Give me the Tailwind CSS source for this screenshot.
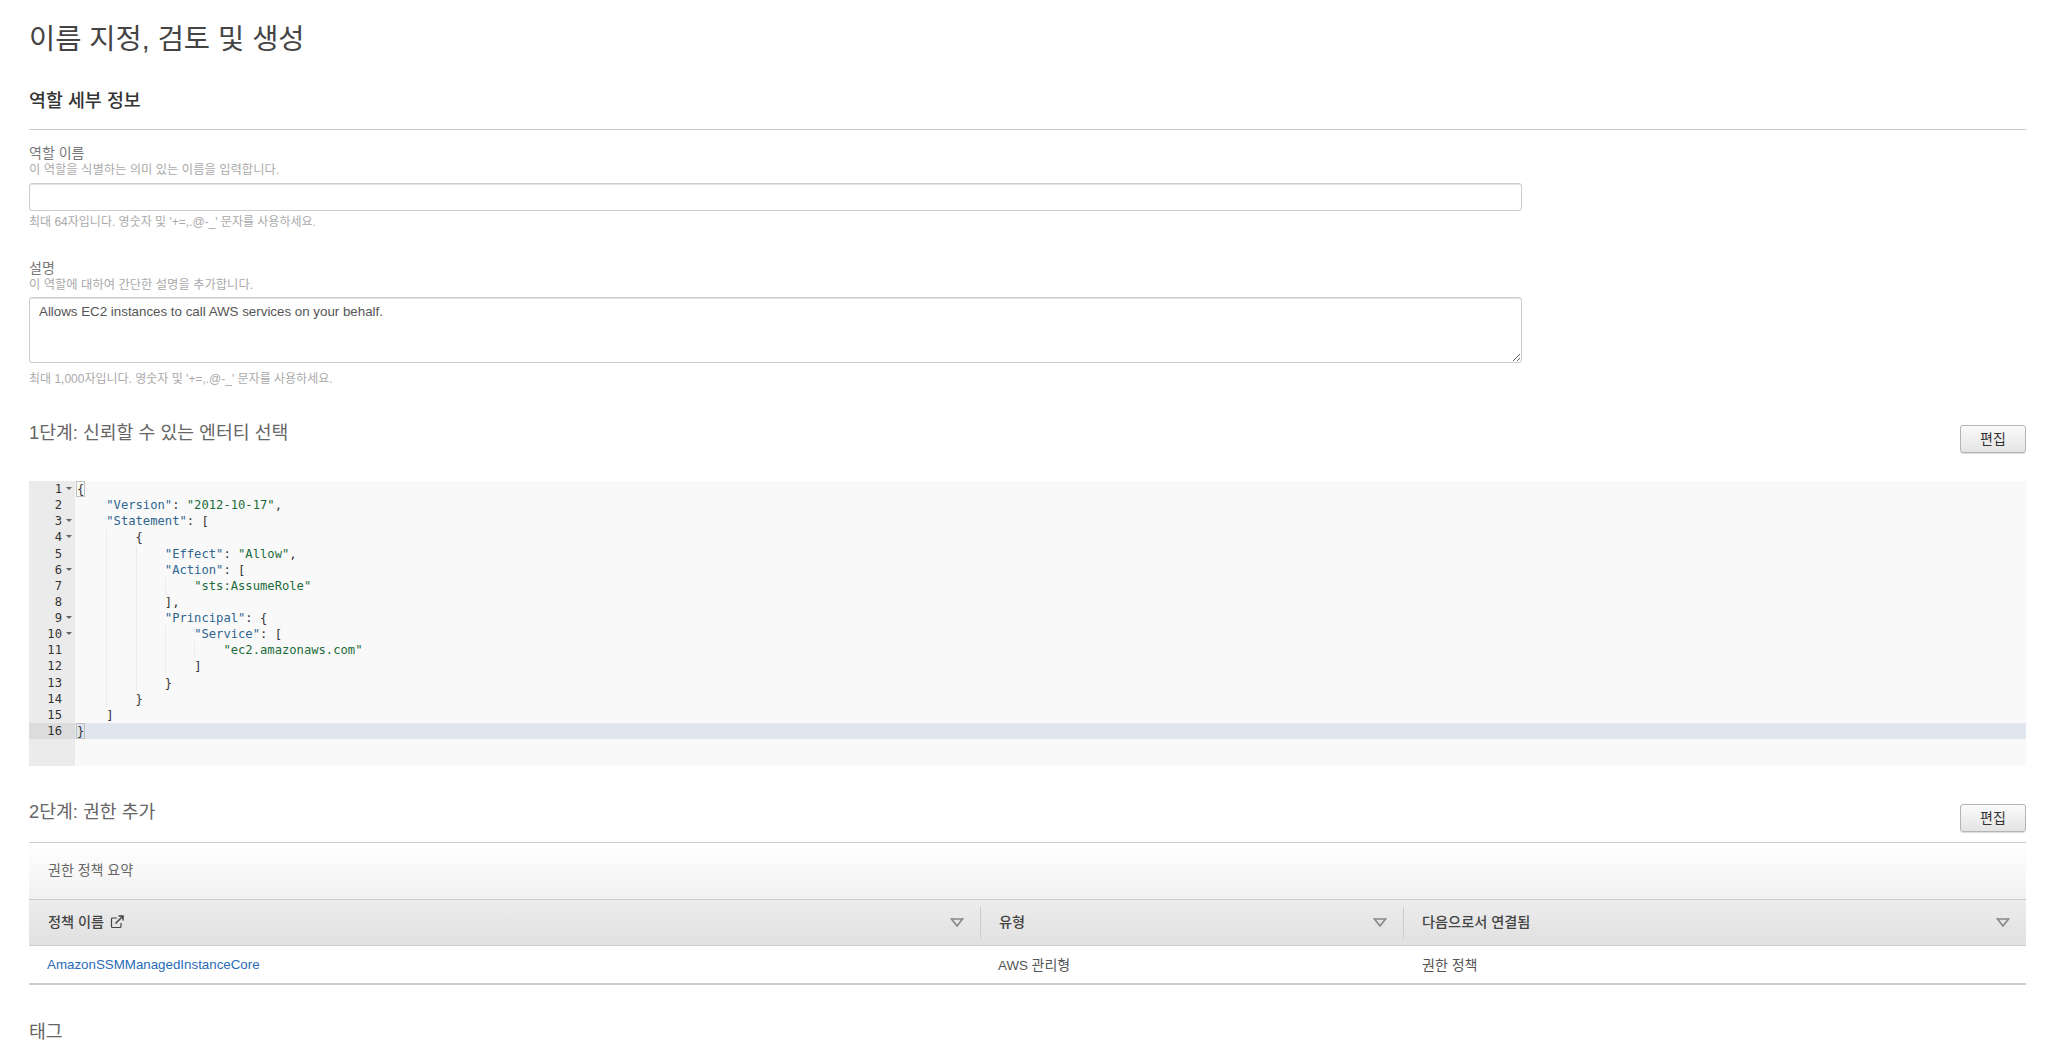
<!DOCTYPE html>
<html lang="ko">
<head>
  <meta charset="UTF-8">
  <title>이름 지정, 검토 및 생성</title>
  <script src="https://cdn.jsdelivr.net/npm/@tailwindcss/browser@4"></script>
</head>
<body class="bg-white text-[#444] h-[1051px] overflow-hidden font-['Liberation_Sans','Noto_Sans_CJK_KR',sans-serif]">
  <main class="pl-[29px] pr-[22px]">
    <h1 class="h-[76px] leading-[78px] text-[28.5px] text-[#444]">이름 지정, 검토 및 생성</h1>

    <h2 class="pt-[13px] pb-4 leading-6 text-[18.4px] font-medium text-[#333] border-b border-[#ccc]">역할 세부 정보</h2>

    <div class="w-[1493px]">
      <div class="mt-[15px] leading-4 text-sm text-[#777]">역할 이름</div>
      <div class="leading-[18px] text-[12.3px] text-[#aaa]">이 역할을 식별하는 의미 있는 이름을 입력합니다.</div>
      <input type="text" class="block mt-[4px] w-full h-[28px] bg-white border border-[#ccc] rounded-[3px] shadow-[inset_0_1px_0_#e4e4e4]">
      <div class="mt-[3px] leading-4 text-xs text-[#aaa]">최대 64자입니다. 영숫자 및 '+=,.@-_' 문자를 사용하세요.</div>

      <div class="mt-[30px] leading-4 text-sm text-[#777]">설명</div>
      <div class="leading-[18px] text-[12.3px] text-[#aaa]">이 역할에 대하여 간단한 설명을 추가합니다.</div>
      <textarea class="block mt-[3px] w-full h-[66px] px-[9px] py-[5px] leading-[18px] text-[13.33px] text-[#555] bg-white border border-[#ccc] rounded-[3px] shadow-[inset_0_1px_0_#e4e4e4]">Allows EC2 instances to call AWS services on your behalf.</textarea>
      <div class="mt-[8px] leading-4 text-xs text-[#aaa]">최대 1,000자입니다. 영숫자 및 '+=,.@-_' 문자를 사용하세요.</div>
    </div>

    <div class="mt-[34px] flex justify-between items-start h-[33px]">
      <h2 class="leading-6 text-[18.3px] text-[#666]">1단계: 신뢰할 수 있는 엔터티 선택</h2>
      <button class="mt-[4px] w-[66px] h-[28px] text-sm text-[#333] border border-[#b4b4b4] rounded-[3px] bg-gradient-to-b from-[#fbfbfb] to-[#e4e4e4] shadow-[0_1px_0_#ddd]">편집</button>
    </div>

    <div class="mt-[27px] h-[285px] flex flex-col bg-[#f9f9f9] text-[12.17px] font-['DejaVu_Sans_Mono',monospace] text-[#333] whitespace-pre">
      <div class="flex h-[16.13px] leading-[16.13px]"><div class="relative w-[46px] shrink-0 bg-[#ebebeb] pr-[13px] text-right text-[#333]">1<span class="absolute right-[3px] top-[6px] border-x-[3px] border-t-[3px] border-x-transparent border-t-[#666]"></span></div><div class="pl-[2px]"><span class="outline outline-1 outline-[#c0c0c0]">{</span></div></div>
      <div class="flex h-[16.13px] leading-[16.13px]"><div class="w-[46px] shrink-0 bg-[#ebebeb] pr-[13px] text-right text-[#333]">2</div><div class="pl-[2px]">    <span class="text-[#2f6590]">"Version"</span>: <span class="text-[#1c6b3a]">"2012-10-17"</span>,</div></div>
      <div class="flex h-[16.13px] leading-[16.13px]"><div class="relative w-[46px] shrink-0 bg-[#ebebeb] pr-[13px] text-right text-[#333]">3<span class="absolute right-[3px] top-[6px] border-x-[3px] border-t-[3px] border-x-transparent border-t-[#666]"></span></div><div class="pl-[2px]">    <span class="text-[#2f6590]">"Statement"</span>: [</div></div>
      <div class="flex h-[16.13px] leading-[16.13px]"><div class="relative w-[46px] shrink-0 bg-[#ebebeb] pr-[13px] text-right text-[#333]">4<span class="absolute right-[3px] top-[6px] border-x-[3px] border-t-[3px] border-x-transparent border-t-[#666]"></span></div><div class="pl-[2px]">    <span class="inline-block h-[16.13px] align-top shadow-[inset_1px_0_0_#ececec]">    </span>{</div></div>
      <div class="flex h-[16.13px] leading-[16.13px]"><div class="w-[46px] shrink-0 bg-[#ebebeb] pr-[13px] text-right text-[#333]">5</div><div class="pl-[2px]">    <span class="inline-block h-[16.13px] align-top shadow-[inset_1px_0_0_#ececec]">    </span><span class="inline-block h-[16.13px] align-top shadow-[inset_1px_0_0_#ececec]">    </span><span class="text-[#2f6590]">"Effect"</span>: <span class="text-[#1c6b3a]">"Allow"</span>,</div></div>
      <div class="flex h-[16.13px] leading-[16.13px]"><div class="relative w-[46px] shrink-0 bg-[#ebebeb] pr-[13px] text-right text-[#333]">6<span class="absolute right-[3px] top-[6px] border-x-[3px] border-t-[3px] border-x-transparent border-t-[#666]"></span></div><div class="pl-[2px]">    <span class="inline-block h-[16.13px] align-top shadow-[inset_1px_0_0_#ececec]">    </span><span class="inline-block h-[16.13px] align-top shadow-[inset_1px_0_0_#ececec]">    </span><span class="text-[#2f6590]">"Action"</span>: [</div></div>
      <div class="flex h-[16.13px] leading-[16.13px]"><div class="w-[46px] shrink-0 bg-[#ebebeb] pr-[13px] text-right text-[#333]">7</div><div class="pl-[2px]">    <span class="inline-block h-[16.13px] align-top shadow-[inset_1px_0_0_#ececec]">    </span><span class="inline-block h-[16.13px] align-top shadow-[inset_1px_0_0_#ececec]">    </span><span class="inline-block h-[16.13px] align-top shadow-[inset_1px_0_0_#ececec]">    </span><span class="text-[#1c6b3a]">"sts:AssumeRole"</span></div></div>
      <div class="flex h-[16.13px] leading-[16.13px]"><div class="w-[46px] shrink-0 bg-[#ebebeb] pr-[13px] text-right text-[#333]">8</div><div class="pl-[2px]">    <span class="inline-block h-[16.13px] align-top shadow-[inset_1px_0_0_#ececec]">    </span><span class="inline-block h-[16.13px] align-top shadow-[inset_1px_0_0_#ececec]">    </span>],</div></div>
      <div class="flex h-[16.13px] leading-[16.13px]"><div class="relative w-[46px] shrink-0 bg-[#ebebeb] pr-[13px] text-right text-[#333]">9<span class="absolute right-[3px] top-[6px] border-x-[3px] border-t-[3px] border-x-transparent border-t-[#666]"></span></div><div class="pl-[2px]">    <span class="inline-block h-[16.13px] align-top shadow-[inset_1px_0_0_#ececec]">    </span><span class="inline-block h-[16.13px] align-top shadow-[inset_1px_0_0_#ececec]">    </span><span class="text-[#2f6590]">"Principal"</span>: {</div></div>
      <div class="flex h-[16.13px] leading-[16.13px]"><div class="relative w-[46px] shrink-0 bg-[#ebebeb] pr-[13px] text-right text-[#333]">10<span class="absolute right-[3px] top-[6px] border-x-[3px] border-t-[3px] border-x-transparent border-t-[#666]"></span></div><div class="pl-[2px]">    <span class="inline-block h-[16.13px] align-top shadow-[inset_1px_0_0_#ececec]">    </span><span class="inline-block h-[16.13px] align-top shadow-[inset_1px_0_0_#ececec]">    </span><span class="inline-block h-[16.13px] align-top shadow-[inset_1px_0_0_#ececec]">    </span><span class="text-[#2f6590]">"Service"</span>: [</div></div>
      <div class="flex h-[16.13px] leading-[16.13px]"><div class="w-[46px] shrink-0 bg-[#ebebeb] pr-[13px] text-right text-[#333]">11</div><div class="pl-[2px]">    <span class="inline-block h-[16.13px] align-top shadow-[inset_1px_0_0_#ececec]">    </span><span class="inline-block h-[16.13px] align-top shadow-[inset_1px_0_0_#ececec]">    </span><span class="inline-block h-[16.13px] align-top shadow-[inset_1px_0_0_#ececec]">    </span><span class="inline-block h-[16.13px] align-top shadow-[inset_1px_0_0_#ececec]">    </span><span class="text-[#1c6b3a]">"ec2.amazonaws.com"</span></div></div>
      <div class="flex h-[16.13px] leading-[16.13px]"><div class="w-[46px] shrink-0 bg-[#ebebeb] pr-[13px] text-right text-[#333]">12</div><div class="pl-[2px]">    <span class="inline-block h-[16.13px] align-top shadow-[inset_1px_0_0_#ececec]">    </span><span class="inline-block h-[16.13px] align-top shadow-[inset_1px_0_0_#ececec]">    </span><span class="inline-block h-[16.13px] align-top shadow-[inset_1px_0_0_#ececec]">    </span>]</div></div>
      <div class="flex h-[16.13px] leading-[16.13px]"><div class="w-[46px] shrink-0 bg-[#ebebeb] pr-[13px] text-right text-[#333]">13</div><div class="pl-[2px]">    <span class="inline-block h-[16.13px] align-top shadow-[inset_1px_0_0_#ececec]">    </span><span class="inline-block h-[16.13px] align-top shadow-[inset_1px_0_0_#ececec]">    </span>}</div></div>
      <div class="flex h-[16.13px] leading-[16.13px]"><div class="w-[46px] shrink-0 bg-[#ebebeb] pr-[13px] text-right text-[#333]">14</div><div class="pl-[2px]">    <span class="inline-block h-[16.13px] align-top shadow-[inset_1px_0_0_#ececec]">    </span>}</div></div>
      <div class="flex h-[16.13px] leading-[16.13px]"><div class="w-[46px] shrink-0 bg-[#ebebeb] pr-[13px] text-right text-[#333]">15</div><div class="pl-[2px]">    ]</div></div>
      <div class="flex h-[16.13px] leading-[16.13px] bg-[#dfe6f0]"><div class="w-[46px] shrink-0 bg-[#dcdcdc] pr-[13px] text-right text-[#333]">16</div><div class="pl-[2px]"><span class="outline outline-1 outline-[#c0c0c0]">}</span></div></div>
      <div class="flex-1 w-[46px] bg-[#ebebeb]"></div>
    </div>

    <div class="mt-[34px] flex justify-between items-start h-[32px]">
      <h2 class="leading-6 text-[18.3px] text-[#666]">2단계: 권한 추가</h2>
      <button class="mt-1 w-[66px] h-[28px] text-sm text-[#333] border border-[#b4b4b4] rounded-[3px] bg-gradient-to-b from-[#fbfbfb] to-[#e4e4e4] shadow-[0_1px_0_#ddd]">편집</button>
    </div>

    <section class="mt-[10px] border-t border-[#ccc]">
      <div class="h-[57px] pl-[19px] pb-[2px] flex items-center text-sm text-[#666] border-b border-[#ccc] bg-gradient-to-b from-white to-[#f1f1f1]">권한 정책 요약</div>
      <div class="h-[46px] grid grid-cols-[951px_423px_1fr] items-center text-[14.2px] font-medium text-[#444] border-b border-[#ccc] bg-gradient-to-b from-[#ececec] to-[#e1e1e1]">
        <div class="pl-[19px] pr-4 flex items-center justify-between">
          <span class="flex items-center gap-[6px]">정책 이름
            <svg width="14" height="14" viewBox="0 0 14 14" fill="none" stroke="#444" stroke-width="1.2"><path d="M7 3H2.5A1 1 0 0 0 1.5 4v7.5a1 1 0 0 0 1 1H10a1 1 0 0 0 1-1V8"/><path d="M5.5 8.5 12.5 1.5M8.5 1h4.5v4.5" stroke-width="1.5"/></svg>
          </span>
          <svg width="14" height="9" viewBox="0 0 14 9"><path d="M1.5 1h11L7 8z" fill="#e4e4e4" stroke="#888" stroke-width="1.6"/></svg>
        </div>
        <div class="h-[32px] pl-[18px] pr-4 flex items-center justify-between border-l border-[#ccc]">
          <span>유형</span>
          <svg width="14" height="9" viewBox="0 0 14 9"><path d="M1.5 1h11L7 8z" fill="#e4e4e4" stroke="#888" stroke-width="1.6"/></svg>
        </div>
        <div class="h-[32px] pl-[18px] pr-4 flex items-center justify-between border-l border-[#ccc]">
          <span>다음으로서 연결됨</span>
          <svg width="14" height="9" viewBox="0 0 14 9"><path d="M1.5 1h11L7 8z" fill="#e4e4e4" stroke="#888" stroke-width="1.6"/></svg>
        </div>
      </div>
      <div class="h-[39px] pt-px grid grid-cols-[951px_423px_1fr] items-center text-[13.33px] text-[#555] border-b-2 border-[#ccc]">
        <a class="pl-[18px] text-[#2a6bb8]">AmazonSSMManagedInstanceCore</a>
        <span class="pl-[18px]">AWS <span class="text-sm">관리형</span></span>
        <span class="pl-[19px] text-sm">권한 정책</span>
      </div>
    </section>

    <h2 class="mt-[35px] leading-6 text-[18.3px] text-[#666]">태그</h2>
  </main>
</body>
</html>
